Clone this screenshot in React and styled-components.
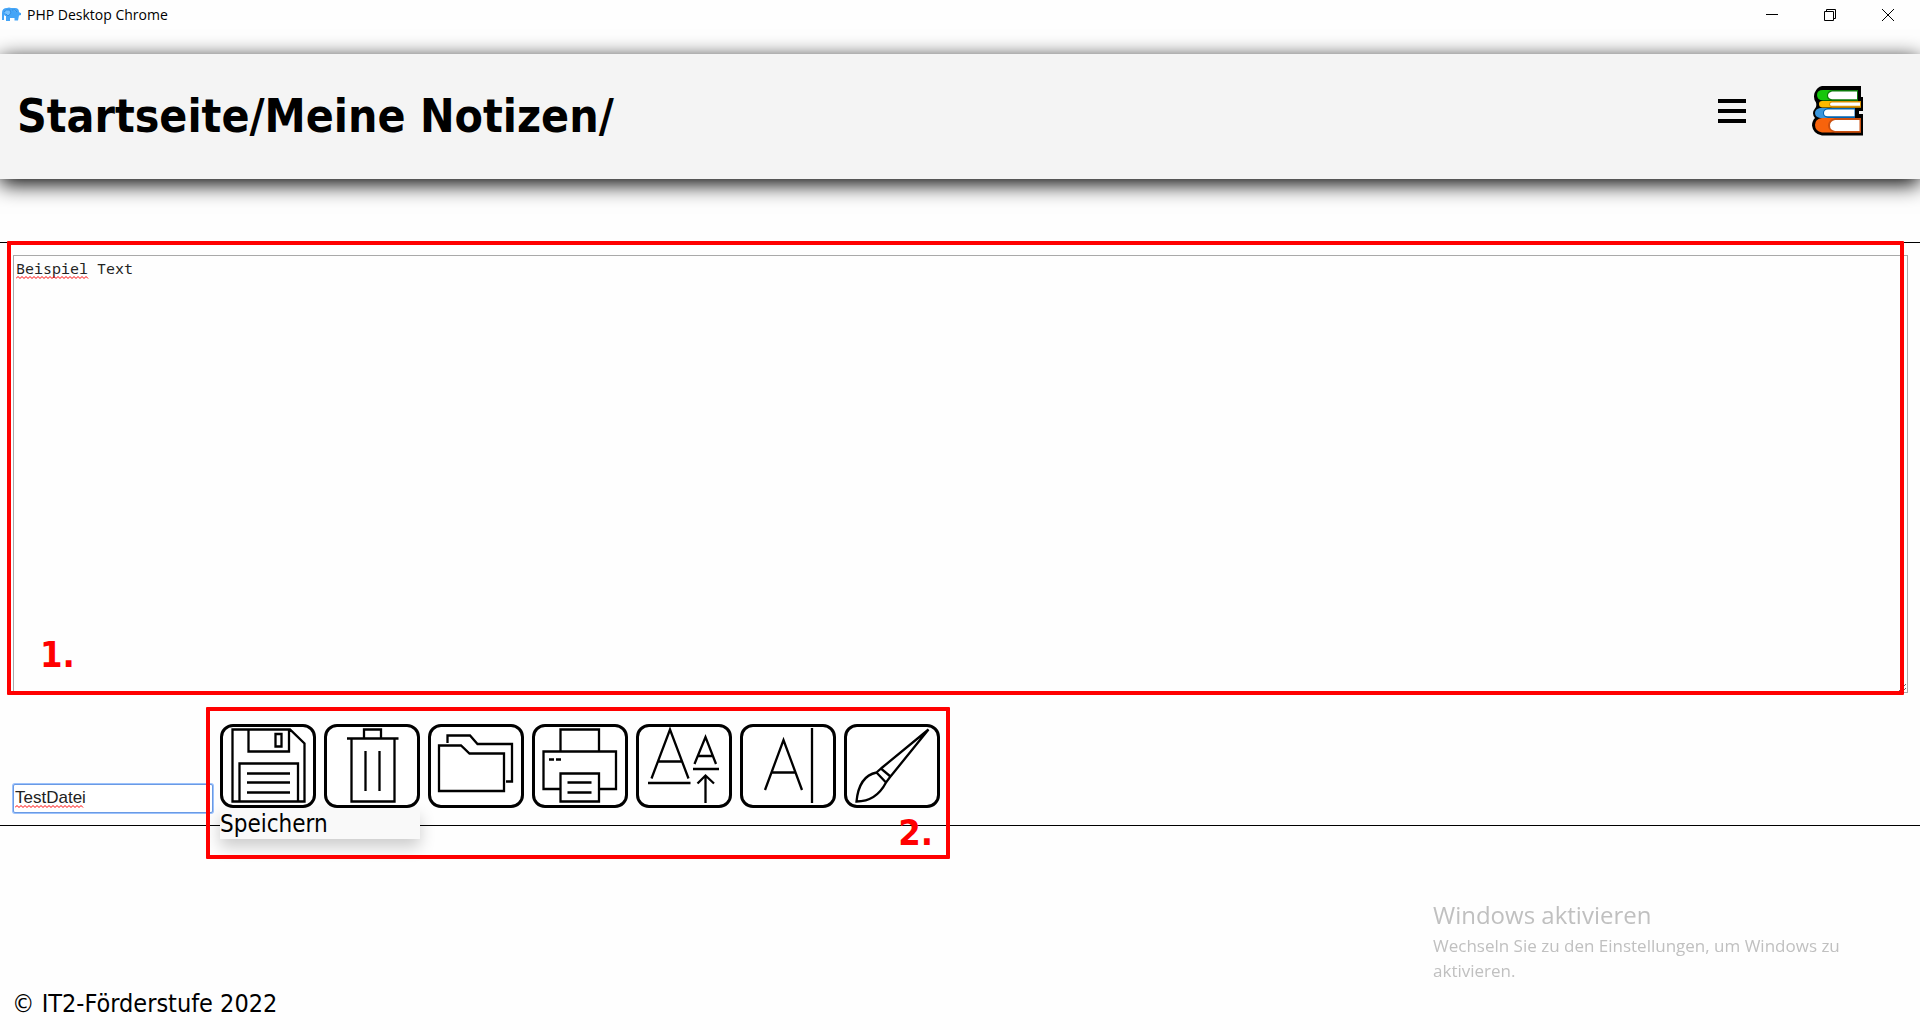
import React from 'react';
import styled, { createGlobalStyle } from 'styled-components';

const tahoma = '"DejaVu Sans Condensed", "DejaVu Sans", sans-serif';
const segoe = '"Open Sans", "Noto Sans", sans-serif';

const GlobalStyle = createGlobalStyle`
  *, *::before, *::after { box-sizing: border-box; }
  body {
    margin: 0;
    background: #fefefe;
    color: #000;
    font-family: ${tahoma};
  }
`;

const Page = styled.div`
  display: flex;
  flex-direction: column;
  min-height: 100vh;
`;

const TitleBar = styled.div`
  display: flex;
  align-items: center;
  height: 29px;
  padding: 0 3px 0 1px;
  font: 14px/20px ${segoe};
`;

const WindowTitle = styled.span`
  flex: 1;
  margin-left: 6px;
`;

const WindowButton = styled.button`
  display: flex;
  align-items: center;
  justify-content: center;
  width: 58px;
  height: 29px;
  padding: 0;
  border: 0;
  background: none;
`;

const Header = styled.header`
  display: flex;
  align-items: center;
  justify-content: space-between;
  height: 125px;
  margin-top: 25px;
  padding: 0 56px 2px 17px;
  background: #f4f4f4;
  box-shadow: 0 5px 20px #000;
`;

const Breadcrumb = styled.h1`
  margin: 0;
  font-size: 46px;
  line-height: 56px;
`;

const Crumb = styled.a`
  color: inherit;
  text-decoration: none;
`;

const HeaderActions = styled.nav`
  display: flex;
  align-items: center;
  gap: 66px;
  margin-bottom: 10px;
`;

const IconButton = styled.button`
  display: flex;
  padding: 0;
  border: 0;
  background: none;
`;

const Workspace = styled.main`
  margin-top: 63px;
  padding: 12px 12px 12px 13px;
  border: solid #000;
  border-width: 1px 0;
`;

const Editor = styled.div`
  position: relative;
  display: flex;
`;

const NoteArea = styled.textarea`
  flex: 1;
  height: 438px;
  padding: 2px;
  border: 1px solid #a9a9a9;
  border-radius: 0;
  outline: 0;
  background: transparent;
  color: #222;
  font: 15px/20px "Noto Sans Mono", "DejaVu Sans Mono", monospace;
`;

const ToolRow = styled.div`
  display: flex;
  align-items: flex-end;
  gap: 7px;
  height: 89px;
  margin-top: 31px;
`;

const FileField = styled.div`
  position: relative;
  display: flex;
  width: 200px;
`;

const FileInput = styled.input`
  width: 100%;
  height: 29px;
  padding: 0 1px 1px;
  border: 1px solid #6a9ae4;
  border-radius: 2px;
  outline: 0;
  box-shadow: 0 0 0 1px #9cc2fc;
  background: #fff;
  color: #222;
  font: 17px/20px "Liberation Sans", Arial, sans-serif;
`;

const SquiggleSvg = styled.svg`
  position: absolute;
  left: ${(p) => p.$left}px;
  top: ${(p) => p.$top}px;
  pointer-events: none;
`;

const Toolbar = styled.div`
  position: relative;
  display: flex;
  align-self: flex-start;
  gap: 8px;
`;

const ToolButton = styled.button`
  display: flex;
  width: 96px;
  height: 84px;
  padding: 0;
  border: 3px solid #000;
  border-radius: 13px;
  background: #fff;
`;

const Tooltip = styled.span`
  position: absolute;
  top: 100%;
  left: 0;
  width: 200px;
  padding-top: 1px;
  background: #f9f9f9;
  box-shadow: 0 8px 16px rgba(0, 0, 0, 0.2);
  font-size: 24px;
  line-height: 30px;
`;

const ToolSlot = styled.div`
  position: relative;
`;

const Marker = styled.div`
  position: absolute;
  inset: ${(p) => p.$inset};
  display: flex;
  align-items: flex-end;
  justify-content: ${(p) => (p.$end ? 'flex-end' : 'flex-start')};
  padding: ${(p) => p.$pad};
  border: 4px solid #f00;
  border-radius: 1px;
  color: #f00;
  font-size: 36px;
  font-weight: bold;
  line-height: 36px;
  pointer-events: none;
`;

const Footer = styled.footer`
  margin-top: auto;
  padding: 0 12px 11px;
  font-size: 25px;
  line-height: 30px;
`;

const Watermark = styled.aside`
  position: fixed;
  right: 67px;
  bottom: 47px;
  width: 420px;
  color: #c0c0c0;
  font: 17px/25px ${segoe};
  pointer-events: none;
`;

const WatermarkTitle = styled.div`
  margin-bottom: 2px;
  font-size: 24px;
  line-height: 32px;
`;

function Elephant() {
  return (
    <svg width="20" height="15" viewBox="0 0 20 15" aria-hidden="true">
      <path
        d="M1 13V6Q1 1 6 1q2-1 4 0h4q4 0 4 4 1 1 2 1v2l-2 .5-1 5h-3.500V11H9v3H5V9Q3.500 9 3 7.500V13z"
        fill="#45a5f7"
      />
      <path d="M3 5Q5 2 9 3q2 3-1 5.500Q6 9 5 7M11 3q3-1 5 2" fill="#79c3ff" stroke="#2583da" strokeWidth=".8" />
    </svg>
  );
}

function Books() {
  return (
    <svg width="52" height="50" viewBox="0 0 52 50" aria-hidden="true">
      <path
        d="M10 0H49V11H51V25H47V28H51V49.500H10Q1 48 0 39.500 0 35 3 32-1 27 3 22.500 5 20.500 4 16.500 1 13 2.500 7 5 1 10 0Z"
        fill="#000"
      />
      <path d="M11 4H46V14.500H11Q5 14 5 9T11 4Z" fill="#16c60c" />
      <path d="M46 4H20q-5 1-5 5.500t5 5H46z" fill="#0c7a0a" />
      <path d="M45 5.500H20q-4 1-4 4t4 3.800H45z" fill="#fff" />
      <path d="M10 15H49V21.500H10Q7 21 7 18t3-3z" fill="#ffb900" />
      <path d="M49 15H20q-3 1-3 3.200t3 3.300H49z" fill="#d89000" />
      <path d="M48 16.500H20q-2 0-2 1.700t2 1.600H48z" fill="#fff" />
      <path d="M8 22H43V32H8Q3 31 3 27t5-5z" fill="#3a96dd" />
      <path d="M43 22H16q-5 1-5 5t5 5H43z" fill="#0063b1" />
      <path d="M42.500 23.500H16q-4 0-4 3.500t4 3.300H42.500z" fill="#fff" />
      <path d="M10 32H49V46.500H10Q3 45 3 39t7-7z" fill="#f7630c" />
      <path d="M49 32H23q-7 2-7 7.500t7 7H49z" fill="#ca5010" />
      <path d="M47.500 34H23q-5 1-5 5.500t5 5.500H47.500z" fill="#fff" />
    </svg>
  );
}

function Squiggle({ width, left, top }) {
  let d = 'M0 2.500';
  for (let x = 2; x <= width; x += 2) d += `L${x} ${x % 4 ? 0.5 : 2.5}`;
  return (
    <SquiggleSvg $left={left} $top={top} width={width} height="3" aria-hidden="true">
      <path d={d} fill="none" stroke="#f00" strokeWidth="1" />
    </SquiggleSvg>
  );
}

const tools = [
  {
    label: 'Speichern',
    tooltip: true,
    d: 'M12.500 5.500H70L84.500 19.500V77.500H12.500ZM28.500 5.500V27.500H69V5.500M55.500 10H61.500V22.500H55.500ZM19.500 77.500V39.500H78V77.500M27 49.500H70M27 58.500H70M27 68.500H70',
  },
  {
    label: 'Löschen',
    d: 'M23 14.500H74.500M40 14.500V5.500H57V14.500M27.500 14.500V77.500H70.500V14.500M41.500 27V67M55.500 27V67',
  },
  {
    label: 'Öffnen',
    d: 'M11 21.500H33L41.500 29.500H76V67H11ZM19.500 19V11.500H42L49.500 20H84V57.500H78',
  },
  {
    label: 'Drucken',
    d: 'M28.500 27.500V5.500H67V27.500M28.500 65H11.500V27.500H84V65H67M28.500 49.500H67V77.500H28.500ZM35.500 58.500H59.500M35.500 68.500H59.500M17 35.500H22M24 35.500H29',
  },
  {
    label: 'Schriftgröße',
    d: 'M15.500 54.500L34 5.500L52.500 54.500M21.500 37.500H46.500M12 59H54.500M58.500 40L69.500 13L80 40M62 32H77M57 45H83M69.500 79V51M61.500 59.500L69.500 51.500L78 59.500',
  },
  {
    label: 'Schriftart',
    d: 'M25 66L43.500 16L62 66M31 48.500H56M72 4V79',
  },
  {
    label: 'Farbe',
    d: 'M37 44.500L84.500 5.500L46.500 52.500M32.500 48.500L42 58.500L46.500 52.500L37 44.500ZM32.500 48.500C20 51 14 62 12.500 77.500C26 77.500 36 70 42 58.500',
  },
];

export default function App() {
  return (
    <Page>
      <GlobalStyle />
      <TitleBar>
        <Elephant />
        <WindowTitle>PHP Desktop Chrome</WindowTitle>
        <WindowButton aria-label="Minimieren">
          <svg width="12" height="12" stroke="#000"><path d="M0 5.500H12" /></svg>
        </WindowButton>
        <WindowButton aria-label="Verkleinern">
          <svg width="12" height="12" fill="none" stroke="#000">
            <path d="M.5 2.500H9.500V11.500H.5ZM2.500 2.500V.5H11.500V9.500H9.500" />
          </svg>
        </WindowButton>
        <WindowButton aria-label="Schließen">
          <svg width="12" height="12" stroke="#000"><path d="M0 0L12 12M12 0L0 12" /></svg>
        </WindowButton>
      </TitleBar>

      <Header>
        <Breadcrumb>
          <Crumb href="#start">Startseite/</Crumb>
          <Crumb href="#notizen">Meine Notizen/</Crumb>
        </Breadcrumb>
        <HeaderActions>
          <IconButton aria-label="Menü">
            <svg width="28" height="24"><path d="M0 2H28M0 12H28M0 22H28" stroke="#000" strokeWidth="4" /></svg>
          </IconButton>
          <IconButton aria-label="Bibliothek">
            <Books />
          </IconButton>
        </HeaderActions>
      </Header>

      <Workspace>
        <Editor>
          <NoteArea aria-label="Notiz" defaultValue="Beispiel Text" spellCheck={false} />
          <Squiggle width={73} left={3} top={21} />
          <Marker $inset="-14px 4px -2px -6px" $pad="0 0 18px 29px">1.</Marker>
        </Editor>
        <ToolRow>
          <FileField>
            <FileInput aria-label="Dateiname" defaultValue="TestDatei" spellCheck={false} />
            <Squiggle width={69} left={2} top={21} />
          </FileField>
          <Toolbar>
            {tools.map((tool) => (
              <ToolSlot key={tool.label}>
                <ToolButton aria-label={tool.label}>
                  <svg width="90" height="78" viewBox="3 3 90 78" fill="none" stroke="#000" strokeWidth="2.300">
                    <path d={tool.d} />
                  </svg>
                </ToolButton>
                {tool.tooltip && <Tooltip role="tooltip">{tool.label}</Tooltip>}
              </ToolSlot>
            ))}
            <Marker $inset="-17px -10px -51px -14px" $pad="0 13px 4px 0" $end>2.</Marker>
          </Toolbar>
        </ToolRow>
      </Workspace>

      <Footer>© IT2-Förderstufe 2022</Footer>

      <Watermark>
        <WatermarkTitle>Windows aktivieren</WatermarkTitle>
        Wechseln Sie zu den Einstellungen, um Windows zu aktivieren.
      </Watermark>
    </Page>
  );
}
